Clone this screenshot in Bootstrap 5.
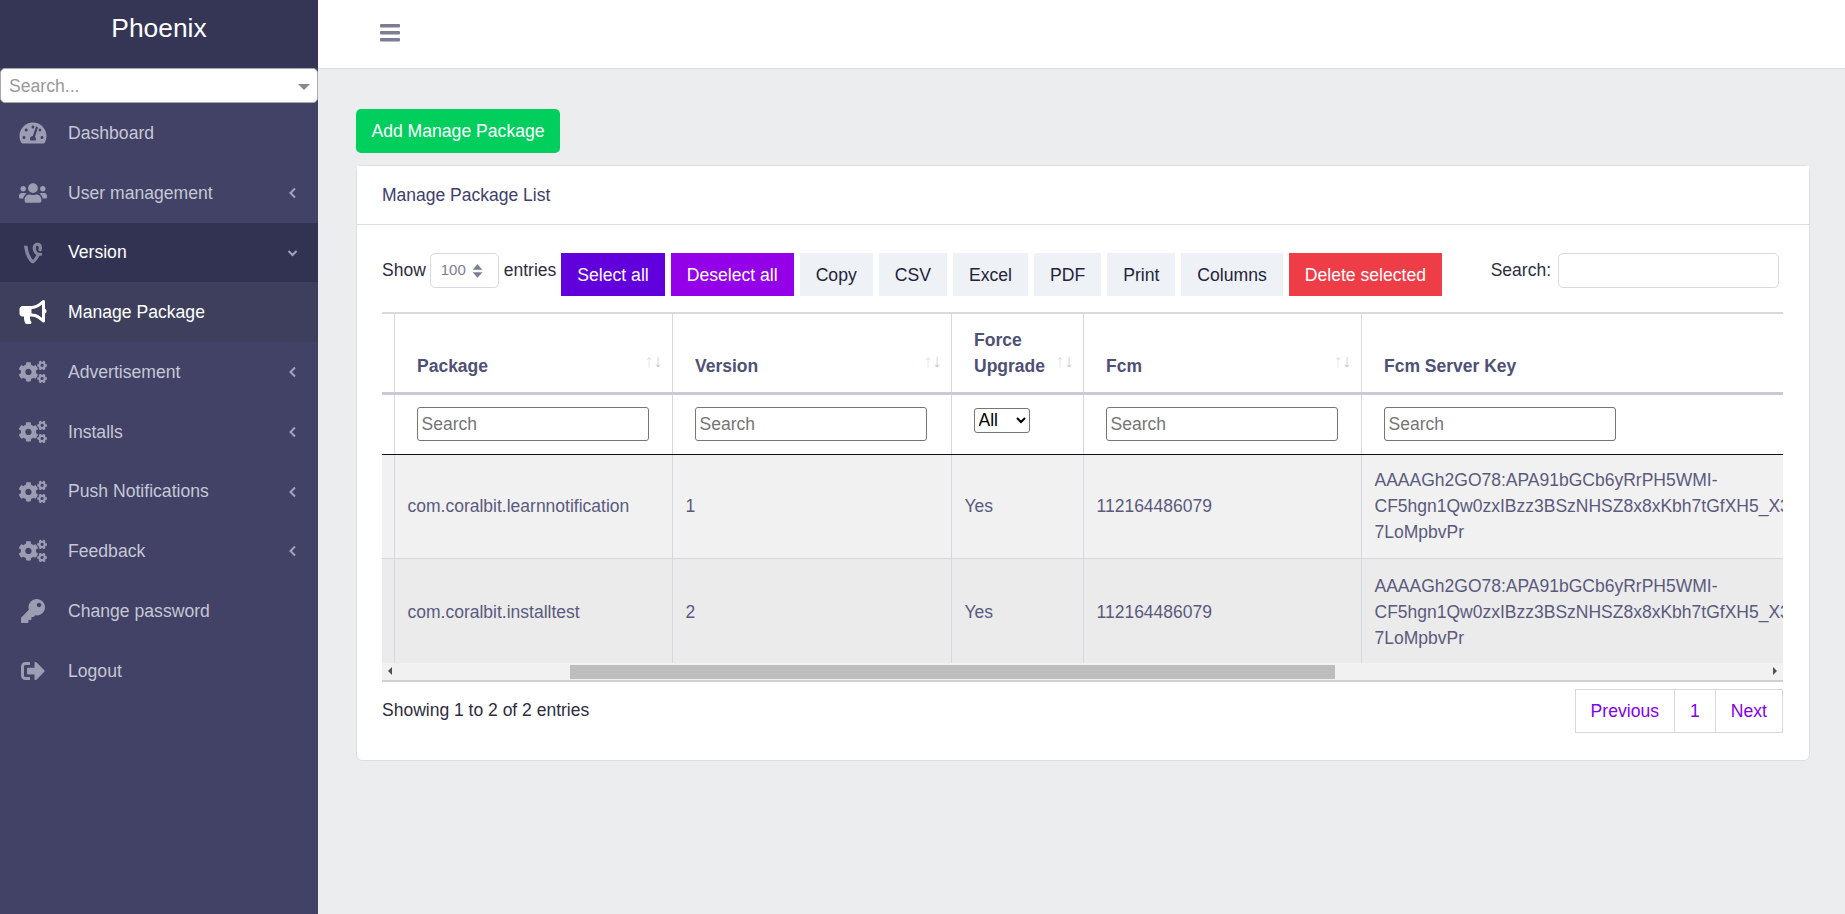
<!DOCTYPE html>
<html lang="en">
<head>
<meta charset="utf-8">
<title>Manage Package</title>
<link rel="stylesheet" href="https://cdn.jsdelivr.net/npm/bootstrap@5.3.0/dist/css/bootstrap.min.css">
<style>
html,body{height:100%;}
body{font-family:"Liberation Sans",Arial,sans-serif;font-size:17.5px;line-height:1.5;background:#ecedef;color:#2d2d3f;overflow:hidden;}
.side-panel{width:318px;flex:0 0 318px;background:#414265;min-height:914px;}
.side-brand{height:68px;background:#353556;color:#fff;font-size:26.4px;text-align:center;line-height:56px;}
.side-search{height:35px;background:#fff;border:1px solid #aaa;border-radius:5px;color:#999;font-size:17.6px;line-height:35px;padding-left:8px;position:relative;}
.side-search::after{content:"";position:absolute;right:7px;top:15px;border-style:solid;border-color:#888 transparent transparent;border-width:6px 6px 0;}
.side-link{height:59.75px;color:#c6c7d6;font-size:17.6px;text-decoration:none;padding:.6px 21px 0 19px;}
.side-link:hover{color:#fff;}
.side-ico{width:28px;height:24px;fill:#9c9db3;margin-right:21px;flex:0 0 28px;}
.side-chev{width:9px;height:12px;fill:none;stroke:#a3a4b8;stroke-width:2;margin-left:auto;}
.side-open{background:#323353;color:#fff;}
.side-open .side-ico{fill:#85869d;}
.side-current{background:#3e3f5c;color:#fff;}
.side-current .side-ico{fill:#fff;}
.top-strip{height:69px;background:#fff;border-bottom:1px solid #dcdde1;padding:0 0 2px 61.500px;}
.burger{width:20px;height:18px;fill:#7d7d92;}
.page-area{padding:40px 35px 0 38px;}
.btn-add{background:#00cf5e;color:#fff;border:0;border-radius:5px;font-size:17.6px;height:44px;width:204px;padding:0;margin-bottom:12px;}
.list-card{border:1px solid #dcdde2;border-radius:6px;background:#fff;height:596px;}
.list-head{height:59px;background:#fff;border-bottom:1px solid #dcdde2;padding:0 25px;color:#40406a;font-size:17.5px;}
.list-body{padding:28px 26px 0 25px;}
.tools{height:59px;}
.len-label{line-height:26px;margin-top:4px;}
.len-entries{margin-right:5px;}
.len-select{width:69px;height:35px;font-size:15px;color:#7d7d92;padding:0 0 0 10px;margin:0 5px 0 4px;border-radius:5px;border-color:#d8d9df;background-image:url("data:image/svg+xml,%3Csvg xmlns='http://www.w3.org/2000/svg' width='10' height='14'%3E%3Cpath fill='%237d7d92' d='M5 1l4.500 5h-9zM5 13L.5 8h9z'/%3E%3C/svg%3E");background-position:right 15px center;background-size:11px 16px;}
.tool-btn{height:43px;border:0;border-radius:0;font-size:17.6px;padding:2px 16px 0;margin-right:6px;background:#eef1f5;color:#23233a;}
.tool-sel,.tool-sel:hover{background:#6200dd;color:#fff;}
.tool-desel,.tool-desel:hover{background:#9400e8;color:#fff;}
.tool-del,.tool-del:hover{background:#ef3d47;color:#fff;}
.tool-search{width:221px;height:35px;border:1px solid #d8d9df;border-radius:5px;margin-left:7px;}
.find-box{margin-right:4px;}
.grid-wrap{overflow:hidden;}
.pkg-grid{table-layout:fixed;width:2503px;border-collapse:collapse;margin:0;color:#5a5a7c;font-size:17.5px;line-height:26px;}
.pkg-grid th,.pkg-grid td{border-right:1px solid #d6d8df;}
.pkg-grid .head-row th{border-top:2px solid #d8d9df;border-bottom:3px solid #c8cbd7;padding:12px 22px 13px 22.500px;vertical-align:bottom;font-weight:700;position:relative;height:80px;color:#4f5075;}
.pkg-grid .filter-row th{padding:12px 22px;height:61px;border-bottom:1px solid #111;vertical-align:top;font-weight:400;}
.pkg-grid .data-row td{padding:12px 12px 12px 13px;vertical-align:middle;overflow-wrap:break-word;height:104px;border-bottom:1px solid #d6d8df;}
.pkg-grid .data-row:last-child td{border-bottom:0;height:105px;padding-top:14px;}
.row-a td{background:#f1f1f2;}
.row-b td{background:#ebebec;}
.w0{width:100px;}.w1{width:225px;}.w2{width:278px;}.w3{width:279px;}.w4{width:132px;}.w5{width:278px;}.w6{width:700px;}.w7{width:511px;}
.col-find{width:232px;height:34px;border:1px solid #767676;border-radius:3px;padding:2px 4px 0;font-size:17.5px;display:block;}
.col-find::placeholder{color:#757575;}
.col-pick{font-size:17.5px;width:56px;height:25px;margin-top:1px;border:1px solid #767676;border-radius:3px;background:#fff;display:block;padding:0;color:#000;}
.sort-mark{position:absolute;right:9px;bottom:22px;font-size:18px;line-height:18px;font-weight:400;color:#c6cbdb;}
.sort-mark b{font-weight:400;color:#dfe3ec;}
.fake-scroll{height:19px;background:#f1f1f1;border-bottom:2px solid #cfd0d4;}
.fake-arrow{flex:0 0 17px;height:16px;}
.fake-arrow path{fill:#505050;}
.fake-gap{flex:0 0 171px;}
.fake-thumb{flex:0 0 765px;height:14px;background:#bdbdbd;margin-top:2px;}
.fake-fill{flex:1 1 auto;}
.info-row{padding-top:7px;}
.info-text{margin-top:8px;}
.pager{margin:0;}
.pager .page-link{border:1px solid #d8d9e0;border-radius:0!important;color:#8000f0;font-size:17.6px;height:44px;padding:0 15px;line-height:42px;background:#fff;}
.main-col{min-width:0;}
</style>
</head>
<body>
<div class="d-flex h-100">
  <aside class="side-panel">
    <div class="side-brand">Phoenix</div>
    <div class="side-search">Search...</div>
    <nav class="nav flex-column">
      <a class="side-link d-flex align-items-center" href="#"><svg class="side-ico" viewBox="0 0 576 512"><path d="M288 32C128.94 32 0 160.94 0 320c0 52.8 14.25 102.26 39.06 144.8 5.61 9.62 16.3 15.2 27.44 15.2h443c11.14 0 21.83-5.58 27.44-15.2C561.75 422.26 576 372.8 576 320c0-159.06-128.94-288-288-288zm0 64c14.71 0 26.58 10.13 30.32 23.65-1.11 2.26-2.64 4.23-3.45 6.67l-9.22 27.67c-5.13 3.49-10.97 6.01-17.64 6.01-17.67 0-32-14.33-32-32S270.33 96 288 96zM96 384c-17.67 0-32-14.33-32-32s14.33-32 32-32 32 14.33 32 32-14.33 32-32 32zm48-160c-17.67 0-32-14.33-32-32s14.33-32 32-32 32 14.33 32 32-14.33 32-32 32zm246.77-72.41l-61.33 184C343.13 347.33 352 364.54 352 384c0 11.72-3.38 22.55-8.88 32H232.88c-5.5-9.45-8.88-20.28-8.88-32 0-33.94 26.5-61.43 59.9-63.59l61.34-184.01c4.17-12.56 17.73-19.45 30.36-15.17 12.57 4.19 19.35 17.79 15.17 30.36zm14.66 57.2l15.52-46.55c3.47-1.29 7.13-2.23 11.05-2.23 17.67 0 32 14.33 32 32s-14.33 32-32 32c-11.38-.01-20.89-6.28-26.57-15.22zM480 384c-17.67 0-32-14.33-32-32s14.33-32 32-32 32 14.33 32 32-14.33 32-32 32z"/></svg>Dashboard</a>
      <a class="side-link d-flex align-items-center" href="#"><svg class="side-ico" viewBox="0 0 640 512"><path d="M96 224c35.3 0 64-28.7 64-64s-28.7-64-64-64-64 28.7-64 64 28.7 64 64 64zm448 0c35.3 0 64-28.7 64-64s-28.7-64-64-64-64 28.7-64 64 28.7 64 64 64zm32 32h-64c-17.6 0-33.5 7.1-45.1 18.6 40.3 22.1 68.9 62 75.1 109.4h66c17.7 0 32-14.3 32-32v-32c0-35.3-28.7-64-64-64zm-256 0c61.9 0 112-50.1 112-112S381.9 32 320 32 208 82.1 208 144s50.1 112 112 112zm76.8 32h-8.3c-20.8 10-43.9 16-68.5 16s-47.6-6-68.5-16h-8.3C179.6 288 128 339.6 128 403.2V432c0 26.5 21.5 48 48 48h288c26.5 0 48-21.5 48-48v-28.8c0-63.6-51.6-115.2-115.2-115.2zm-223.7-13.4C161.5 263.1 145.6 256 128 256H64c-35.3 0-64 28.7-64 64v32c0 17.7 14.3 32 32 32h65.9c6.3-47.4 34.9-87.3 75.2-109.4z"/></svg>User management<svg class="side-chev" viewBox="0 0 9 12"><path d="M7 1.500L2.500 6 7 10.500"/></svg></a>
      <a class="side-link side-open d-flex align-items-center" href="#"><svg class="side-ico" viewBox="0 0 384 512"><path d="M384 254.7v52.1c-18.4 4.2-36.9 6.1-52.1 6.1-36.9 77.4-103 143.8-125.1 156.2-14 7.9-27.1 8.4-42.7-.8C137 452 34.2 367.7 0 102.7h74.5C93.2 261.8 139 343.4 189.3 404.5c27.9-27.9 54.8-65.1 75.6-106.9-49.8-25.3-80.1-80.9-80.1-145.8 0-65.6 37.7-115.1 102.2-115.1 114.9 0 106.2 127.9 81.6 181.5 0 0-46.4 9.2-63.5-20.5 3.4-11.3 8.2-30.8 8.2-48.5 0-31.3-11.3-46.6-28.4-46.6-18.2 0-30.8 17.1-30.8 50 .1 79.2 59.4 118.7 129.9 101.9z"/></svg>Version<svg class="side-chev" viewBox="0 0 9 12"><path d="M.5 4L4.500 8 8.500 4"/></svg></a>
      <a class="side-link side-current d-flex align-items-center" href="#"><svg class="side-ico" viewBox="0 0 576 512"><path d="M576 240c0-23.63-12.95-44.04-32-55.12V32.01C544 23.26 537.02 0 512 0c-7.12 0-14.19 2.38-19.98 7.02l-85.03 68.03C364.28 109.19 310.66 128 256 128H64c-35.35 0-64 28.65-64 64v96c0 35.35 28.65 64 64 64h33.7c-1.39 10.48-2.18 21.14-2.18 32 0 39.77 9.26 77.35 25.56 110.94 5.19 10.69 16.52 17.06 28.4 17.06h74.28c26.05 0 41.69-29.84 25.9-50.56-16.4-21.52-26.15-48.36-26.15-77.44 0-11.11 1.62-21.79 4.41-32H256c54.66 0 108.28 18.81 150.98 52.95l85.03 68.03a32.023 32.023 0 0 0 19.98 7.02c24.92 0 32-22.78 32-32V295.13C563.05 284.04 576 263.63 576 240zm-96 141.42l-33.05-26.44C392.95 311.78 325.12 288 256 288v-96c69.12 0 136.95-23.78 190.95-66.98L480 98.58v282.84z"/></svg>Manage Package</a>
      <a class="side-link d-flex align-items-center" href="#"><svg class="side-ico" viewBox="0 0 640 512"><use href="#cog"/></svg>Advertisement<svg class="side-chev" viewBox="0 0 9 12"><path d="M7 1.500L2.500 6 7 10.500"/></svg></a>
      <a class="side-link d-flex align-items-center" href="#"><svg class="side-ico" viewBox="0 0 640 512"><use href="#cog"/></svg>Installs<svg class="side-chev" viewBox="0 0 9 12"><path d="M7 1.500L2.500 6 7 10.500"/></svg></a>
      <a class="side-link d-flex align-items-center" href="#"><svg class="side-ico" viewBox="0 0 640 512"><use href="#cog"/></svg>Push Notifications<svg class="side-chev" viewBox="0 0 9 12"><path d="M7 1.500L2.500 6 7 10.500"/></svg></a>
      <a class="side-link d-flex align-items-center" href="#"><svg class="side-ico" viewBox="0 0 640 512"><use href="#cog"/></svg>Feedback<svg class="side-chev" viewBox="0 0 9 12"><path d="M7 1.500L2.500 6 7 10.500"/></svg></a>
      <a class="side-link d-flex align-items-center" href="#"><svg class="side-ico" viewBox="0 0 512 512"><path d="M512 176.001C512 273.203 433.202 352 336 352c-11.22 0-22.19-1.062-32.827-3.069l-24.012 27.014A23.999 23.999 0 0 1 261.223 384H224v40c0 13.255-10.745 24-24 24h-40v40c0 13.255-10.745 24-24 24H24c-13.255 0-24-10.745-24-24v-78.059c0-6.365 2.529-12.47 7.029-16.971l161.802-161.802C163.108 213.814 160 195.271 160 176 160 78.798 238.797.001 335.999 0 433.488-.001 512 78.511 512 176.001zM336 128c0 26.51 21.49 48 48 48s48-21.49 48-48-21.49-48-48-48-48 21.49-48 48z"/></svg>Change password</a>
      <a class="side-link d-flex align-items-center" href="#"><svg class="side-ico" viewBox="0 0 512 512"><path d="M180 448H96c-53 0-96-43-96-96V160c0-53 43-96 96-96h84c6.6 0 12 5.4 12 12v40c0 6.6-5.4 12-12 12H96c-17.7 0-32 14.3-32 32v192c0 17.7 14.3 32 32 32h84c6.6 0 12 5.4 12 12v40c0 6.6-5.4 12-12 12z"/><path d="M497 273L329 441c-15 15-41 4.500-41-17v-96H152c-13.300 0-24-10.700-24-24v-96c0-13.300 10.700-24 24-24h136V88c0-21.400 25.900-32 41-17l168 168c9.300 9.400 9.300 24.600 0 34z"/></svg>Logout</a>
    </nav>
  </aside>
  <div class="flex-grow-1 main-col">
    <header class="top-strip d-flex align-items-center">
      <svg class="burger" viewBox="0 0 20 18"><rect y="0" width="20" height="3.600" rx="1"/><rect y="7" width="20" height="3.600" rx="1"/><rect y="14" width="20" height="3.600" rx="1"/></svg>
    </header>
    <main class="page-area">
      <button class="btn btn-add d-block" type="button">Add Manage Package</button>
      <div class="card list-card">
        <div class="list-head d-flex align-items-center">Manage Package List</div>
        <div class="list-body">
          <div class="tools d-flex align-items-start justify-content-between">
            <div class="d-flex align-items-start">
              <span class="len-label">Show</span>
              <select class="form-select len-select"><option>100</option></select>
              <span class="len-label len-entries">entries</span>
              <button class="btn tool-btn tool-sel" type="button">Select all</button>
              <button class="btn tool-btn tool-desel" type="button">Deselect all</button>
              <button class="btn tool-btn" type="button">Copy</button>
              <button class="btn tool-btn" type="button">CSV</button>
              <button class="btn tool-btn" type="button">Excel</button>
              <button class="btn tool-btn" type="button">PDF</button>
              <button class="btn tool-btn" type="button">Print</button>
              <button class="btn tool-btn" type="button">Columns</button>
              <button class="btn tool-btn tool-del" type="button">Delete selected</button>
            </div>
            <div class="find-box d-flex align-items-start">
              <span class="len-label">Search:</span>
              <input class="tool-search" type="search" aria-label="Search">
            </div>
          </div>
          <div class="grid-wrap" id="gridWrap">
            <table class="pkg-grid">
              <colgroup><col class="w0"><col class="w1"><col class="w2"><col class="w3"><col class="w4"><col class="w5"><col class="w6"><col class="w7"></colgroup>
              <thead>
                <tr class="head-row">
                  <th></th>
                  <th></th>
                  <th>Package<span class="sort-mark"><b>↑</b>↓</span></th>
                  <th>Version<span class="sort-mark"><b>↑</b>↓</span></th>
                  <th>Force Upgrade<span class="sort-mark"><b>↑</b>↓</span></th>
                  <th>Fcm<span class="sort-mark"><b>↑</b>↓</span></th>
                  <th>Fcm Server Key</th>
                  <th></th>
                </tr>
                <tr class="filter-row">
                  <th></th>
                  <th></th>
                  <th><input class="col-find" placeholder="Search" aria-label="Package"></th>
                  <th><input class="col-find" placeholder="Search" aria-label="Version"></th>
                  <th><select class="col-pick" aria-label="Force Upgrade"><option>All</option></select></th>
                  <th><input class="col-find" placeholder="Search" aria-label="Fcm"></th>
                  <th><input class="col-find" placeholder="Search" aria-label="Fcm Server Key"></th>
                  <th></th>
                </tr>
              </thead>
              <tbody>
                <tr class="data-row row-a">
                  <td></td><td></td>
                  <td>com.coralbit.learnnotification</td><td>1</td><td>Yes</td><td>112164486079</td>
                  <td>AAAAGh2GO78:APA91bGCb6yRrPH5WMI-CF5hgn1Qw0zxIBzz3BSzNHSZ8x8xKbh7tGfXH5_X3qT9vKd2mZpLw8RfYc-7LoMpbvPr</td><td></td>
                </tr>
                <tr class="data-row row-b">
                  <td></td><td></td>
                  <td>com.coralbit.installtest</td><td>2</td><td>Yes</td><td>112164486079</td>
                  <td>AAAAGh2GO78:APA91bGCb6yRrPH5WMI-CF5hgn1Qw0zxIBzz3BSzNHSZ8x8xKbh7tGfXH5_X3qT9vKd2mZpLw8RfYc-7LoMpbvPr</td><td></td>
                </tr>
              </tbody>
            </table>
          </div>
          <div class="fake-scroll d-flex">
            <svg class="fake-arrow" viewBox="0 0 17 16"><path d="M10 4v8L6 8z"/></svg>
            <div class="fake-gap"></div>
            <div class="fake-thumb"></div>
            <div class="fake-fill"></div>
            <svg class="fake-arrow" viewBox="0 0 17 16"><path d="M7 4v8l4-4z"/></svg>
          </div>
          <div class="info-row d-flex justify-content-between align-items-start">
            <div class="info-text">Showing 1 to 2 of 2 entries</div>
            <ul class="pagination pager">
              <li class="page-item"><a class="page-link" href="#">Previous</a></li>
              <li class="page-item"><a class="page-link" href="#">1</a></li>
              <li class="page-item"><a class="page-link" href="#">Next</a></li>
            </ul>
          </div>
        </div>
      </div>
    </main>
  </div>
</div>
<svg class="d-none" aria-hidden="true"><defs><path id="cog" d="M512.1 191l-8.2 14.3c-3 5.3-9.4 7.5-15.1 5.4-11.8-4.4-22.6-10.7-32.1-18.6-4.6-3.8-5.8-10.5-2.8-15.7l8.2-14.3c-6.9-8-12.3-17.3-15.9-27.4h-16.5c-6 0-11.2-4.3-12.2-10.3-2-12-2.1-24.6 0-37.1 1-6 6.2-10.4 12.2-10.4h16.5c3.6-10.1 9-19.4 15.9-27.4l-8.2-14.3c-3-5.2-1.9-11.9 2.8-15.7 9.5-7.9 20.4-14.2 32.1-18.6 5.7-2.1 12.1.1 15.1 5.4l8.2 14.3c10.5-1.9 21.2-1.9 31.7 0L552 6.3c3-5.3 9.4-7.5 15.1-5.4 11.8 4.4 22.6 10.7 32.1 18.6 4.6 3.8 5.8 10.5 2.8 15.7l-8.2 14.3c6.9 8 12.3 17.3 15.9 27.4h16.5c6 0 11.2 4.3 12.2 10.3 2 12 2.1 24.6 0 37.1-1 6-6.2 10.4-12.2 10.4h-16.5c-3.6 10.1-9 19.4-15.9 27.4l8.2 14.3c3 5.2 1.9 11.9-2.8 15.7-9.5 7.9-20.4 14.2-32.1 18.6-5.7 2.1-12.1-.1-15.1-5.4l-8.2-14.3c-10.4 1.9-21.2 1.9-31.7 0zm-10.5-58.8c38.5 29.6 82.4-14.3 52.8-52.8-38.5-29.7-82.4 14.3-52.8 52.8zM386.3 286.1l33.7 16.8c10.1 5.8 14.5 18.1 10.5 29.1-8.9 24.2-26.4 46.4-42.6 65.8-7.4 8.9-20.2 11.1-30.3 5.3l-29.1-16.8c-16 13.7-34.6 24.6-54.9 31.7v33.6c0 11.6-8.3 21.6-19.7 23.6-24.6 4.2-50.4 4.4-75.9 0-11.5-2-20-11.9-20-23.6V418c-20.3-7.2-38.9-18-54.9-31.7L74 403c-10 5.8-22.9 3.6-30.3-5.3-16.2-19.4-33.3-41.6-42.2-65.7-4-10.9.4-23.2 10.5-29.1l33.3-16.8c-3.9-20.9-3.9-42.4 0-63.4L12 205.8c-10.1-5.8-14.6-18.1-10.5-29 8.9-24.2 26-46.4 42.2-65.8 7.4-8.9 20.2-11.1 30.3-5.3l29.1 16.8c16-13.7 34.6-24.6 54.9-31.7V57.1c0-11.5 8.2-21.5 19.6-23.5 24.6-4.2 50.5-4.4 76-.1 11.5 2 20 11.9 20 23.6v33.6c20.3 7.2 38.9 18 54.9 31.7l29.1-16.8c10-5.8 22.9-3.6 30.3 5.3 16.2 19.4 33.2 41.6 42.1 65.8 4 10.9.1 23.2-10 29.1l-33.7 16.8c3.9 21 3.9 42.5 0 63.5zm-117.6 21.1c59.2-77-28.7-164.9-105.7-105.7-59.2 77 28.7 164.9 105.7 105.7zm243.4 182.7l-8.2 14.3c-3 5.3-9.4 7.5-15.1 5.4-11.8-4.4-22.6-10.7-32.1-18.6-4.6-3.8-5.8-10.5-2.8-15.7l8.2-14.3c-6.9-8-12.3-17.3-15.9-27.4h-16.5c-6 0-11.2-4.3-12.2-10.3-2-12-2.1-24.6 0-37.1 1-6 6.2-10.4 12.2-10.4h16.5c3.6-10.1 9-19.4 15.9-27.4l-8.2-14.3c-3-5.2-1.9-11.9 2.8-15.7 9.5-7.9 20.4-14.2 32.1-18.6 5.7-2.1 12.1.1 15.1 5.4l8.2 14.3c10.5-1.9 21.2-1.9 31.7 0l8.2-14.3c3-5.3 9.4-7.5 15.1-5.4 11.8 4.4 22.6 10.7 32.1 18.6 4.6 3.8 5.8 10.5 2.8 15.7l-8.2 14.3c6.9 8 12.3 17.3 15.9 27.4h16.5c6 0 11.2 4.3 12.2 10.3 2 12 2.1 24.6 0 37.1-1 6-6.2 10.4-12.2 10.4h-16.5c-3.6 10.1-9 19.4-15.9 27.4l8.2 14.3c3 5.2 1.9 11.9-2.8 15.7-9.5 7.9-20.4 14.2-32.1 18.6-5.7 2.1-12.1-.1-15.1-5.4l-8.2-14.3c-10.4 1.9-21.2 1.9-31.7 0zM501.6 431c38.5 29.6 82.4-14.3 52.8-52.8-38.5-29.6-82.4 14.3-52.8 52.8z"/></defs></svg>
<script src="https://cdn.jsdelivr.net/npm/bootstrap@5.3.0/dist/js/bootstrap.bundle.min.js"></script>
<script>document.getElementById('gridWrap').scrollLeft=313;</script>
</body>
</html>
